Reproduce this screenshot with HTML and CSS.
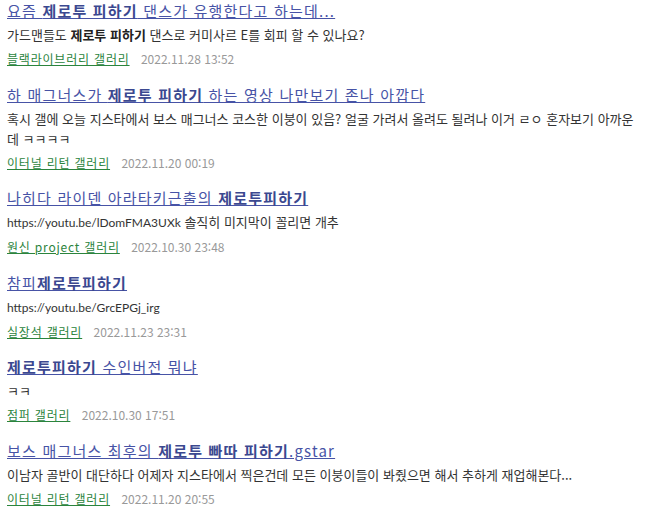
FILE: index.html
```html
<!DOCTYPE html>
<html lang="ko">
<head>
<meta charset="UTF-8" />
<meta name="viewport" content="width=device-width, initial-scale=1" />
<title>제로투 피하기 - 검색</title>
<link rel="stylesheet" href="styles.css">
</head>
<body>

<ul class="result-list">
  <li class="result">
    <a class="result-title" href="#">요즘 <b>제로투 피하기</b> 댄스가 유행한다고 하는데...</a>
    <p class="result-text">가드맨들도 <b>제로투 피하기</b> 댄스로 커미사르 E를 회피 할 수 있나요?</p>
    <div class="result-meta">
      <a class="gall-name" href="#">블랙라이브러리 갤러리</a>
      <span class="date">2022.11.28 13:52</span>
    </div>
  </li>

  <li class="result">
    <a class="result-title" href="#">하 매그너스가 <b>제로투 피하기</b> 하는 영상 나만보기 존나 아깝다</a>
    <p class="result-text">혹시 갤에 오늘 지스타에서 보스 매그너스 코스한 이붕이 있음? 얼굴 가려서 올려도 될려나 이거 ㄹㅇ 혼자보기 아까운데 ㅋㅋㅋㅋ</p>
    <div class="result-meta">
      <a class="gall-name" href="#">이터널 리턴 갤러리</a>
      <span class="date">2022.11.20 00:19</span>
    </div>
  </li>

  <li class="result">
    <a class="result-title" href="#">나히다 라이덴 아라타키근출의 <b>제로투피하기</b></a>
    <p class="result-text"><span class="url">https://youtu.be/lDomFMA3UXk</span> 솔직히 미지막이 꼴리면 개추</p>
    <div class="result-meta">
      <a class="gall-name" href="#">원신 project 갤러리</a>
      <span class="date">2022.10.30 23:48</span>
    </div>
  </li>

  <li class="result">
    <a class="result-title" href="#">참피<b>제로투피하기</b></a>
    <p class="result-text"><span class="url">https://youtu.be/GrcEPGj_irg</span></p>
    <div class="result-meta">
      <a class="gall-name" href="#">실장석 갤러리</a>
      <span class="date">2022.11.23 23:31</span>
    </div>
  </li>

  <li class="result">
    <a class="result-title" href="#"><b>제로투피하기</b> 수인버전 뭐냐</a>
    <p class="result-text">ㅋㅋ</p>
    <div class="result-meta">
      <a class="gall-name" href="#">점퍼 갤러리</a>
      <span class="date">2022.10.30 17:51</span>
    </div>
  </li>

  <li class="result">
    <a class="result-title" href="#">보스 매그너스 최후의 <b>제로투 빠따 피하기</b>.gstar</a>
    <p class="result-text">이남자 골반이 대단하다 어제자 지스타에서 찍은건데 모든 이붕이들이 봐줬으면 해서 추하게 재업해본다...</p>
    <div class="result-meta">
      <a class="gall-name" href="#">이터널 리턴 갤러리</a>
      <span class="date">2022.11.20 20:55</span>
    </div>
  </li>
</ul>

</body>
</html>
```

FILE: styles.css
```css
body {
  margin: 0;
  background: #fff;
  font-family: "Noto Sans CJK KR", "Noto Sans", sans-serif;
  color: #333;
}
.result-list {
  list-style: none;
  margin: 0;
  padding: 0 0 0 7px;
  width: 636px;
}
.result {
  margin-bottom: 14.6px;
}
.result-title {
  display: block;
  font-size: 15px;
  line-height: 22px;
  letter-spacing: 1.2px;
  color: #4753a6;
  text-decoration: underline;
  margin-bottom: 3px;
}
.result-title b {
  font-weight: bold;
  color: #3b4890;
}
.result-text {
  margin: 0 0 4px;
  font-size: 13px;
  line-height: 20px;
  color: #333;
  word-break: break-all;
}
.result-text b {
  font-weight: bold;
  color: #222;
}
.result-text .url {
  font-family: "Lato", sans-serif;
  font-size: 12px;
}
.result-meta {
  font-size: 12px;
  line-height: 20px;
}
.gall-name {
  color: #2b843d;
  text-decoration: underline;
  letter-spacing: 0.8px;
  margin-right: 8px;
}
.date {
  color: #999;
}
```
